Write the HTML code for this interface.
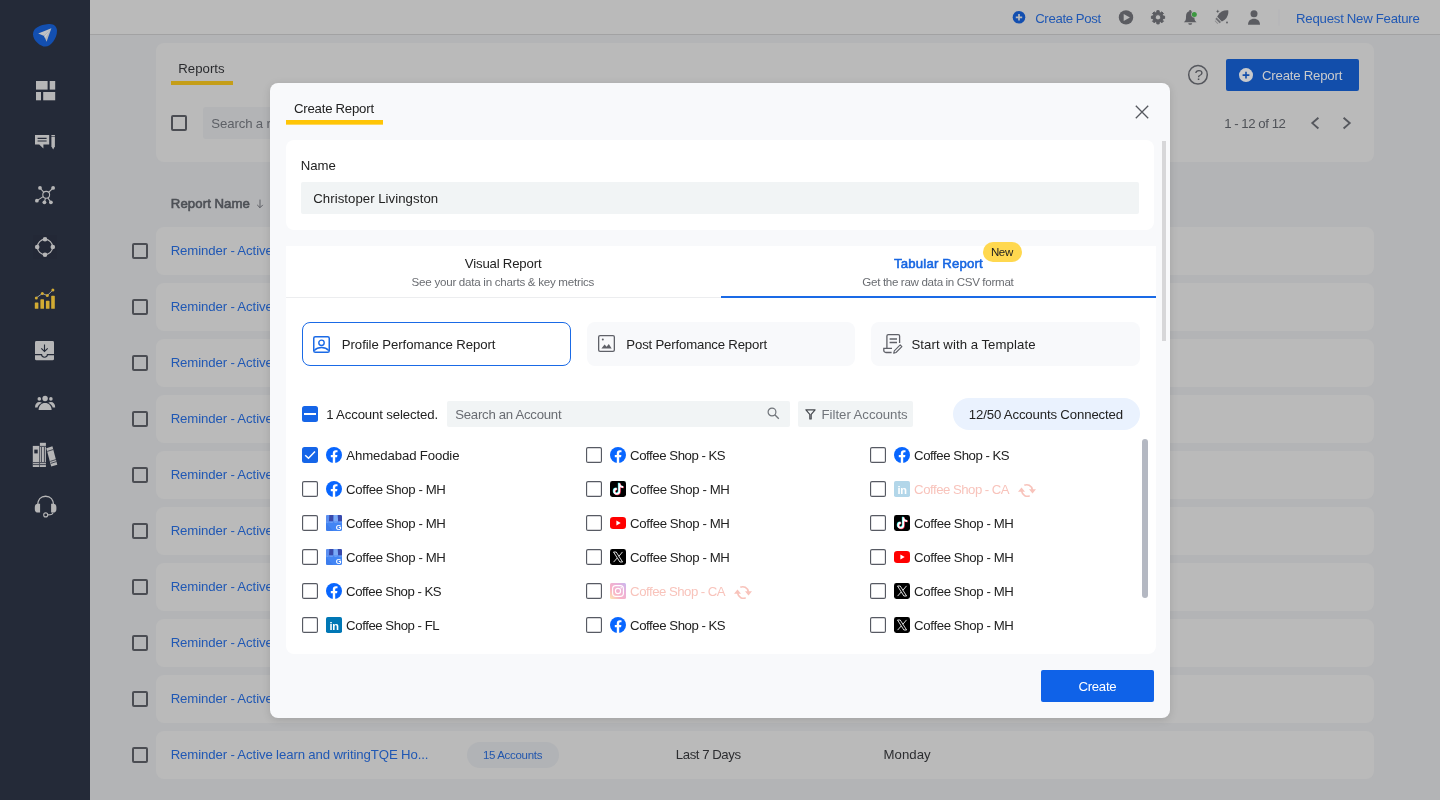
<!DOCTYPE html>
<html lang="en">
<head>
<meta charset="utf-8">
<title>Create Report</title>
<style>
*{box-sizing:border-box;margin:0;padding:0}
html,body{width:1440px;height:800px;overflow:hidden}
body{position:relative;background:#b3b4b6;font-family:"Liberation Sans",sans-serif;font-size:13.7px;color:#222}
#app{position:absolute;left:0;top:0;width:1440px;height:800px;will-change:transform}
.b{position:absolute}
.t{position:absolute;white-space:nowrap;line-height:20px;height:20px;word-spacing:-.2px}
svg{position:absolute;display:block;overflow:visible}
#side{position:absolute;left:0;top:0;width:90px;height:800px;background:#242a38}
#top{position:absolute;left:90px;top:0;width:1350px;height:35px;background:#bababa;border-bottom:1px solid #a2a2a3}
.card{position:absolute;background:#bababa;border-radius:8px}
.row{position:absolute;left:156px;width:1218px;height:48px;background:#bababa;border-radius:8px}
.bcb{position:absolute;width:16px;height:16px;border:2px solid #4b4d53;border-radius:2px}
#modal{position:absolute;left:270px;top:83px;width:900px;height:635px;background:#f8f9fb;border-radius:8px;box-shadow:0 2px 9px rgba(0,0,0,.13)}
.mcb{position:absolute;width:16px;height:16px;border-radius:2px;background:#fff;box-shadow:inset 0 0 0 1.15px #575a63}
.tb{position:absolute;top:322px;width:269px;height:44px;border-radius:8px;background:#f8f9fb}
</style>
</head>
<body>
<div id="app">
<div id="side">
<svg width="90" height="800" viewBox="0 0 90 800">
<!-- logo -->
<path d="M45.3 46.6C40.5 46.6 33 40.6 33 34.2C33 28.2 39.5 25 48.6 24.1C53.8 23.6 57 26.6 57 31C57 38.2 51 46.6 45.3 46.6Z" fill="#134fb0"/>
<path d="M51.4 28.2L38.2 33.6L44.2 36.1Z" fill="#c0c1c3"/>
<path d="M51.4 28.2L44.2 36.1L46.6 41.8Z" fill="#b4b6ba"/>
<path d="M51.4 28.2L44.2 36.1L45 38.2Z" fill="#c8c9cb"/>
<!-- dashboard -->
<g fill="#b6b6b7">
<rect x="36" y="81" width="11.6" height="8.6"/><rect x="49.7" y="81" width="5.5" height="8.6"/>
<rect x="36" y="92" width="5" height="8.3"/><rect x="43.2" y="92" width="12" height="8.3"/>
</g>
<!-- compose -->
<g fill="#b6b6b7">
<path d="M35 135H49.2V144.6H43.4V148.4L39.2 144.6H35Z"/>
<path d="M51.4 136.8H54.9V146.2L53.15 149.4L51.4 146.2Z"/><rect x="51.4" y="135" width="3.5" height="1.2"/>
</g>
<g stroke="#242a38" stroke-width="1.1"><path d="M37.6 138.4H46.6M37.6 141H46.6"/></g>
<!-- network -->
<g stroke="#b6b6b7" stroke-width="1.1" fill="none">
<circle cx="46.2" cy="194.8" r="3.4"/>
<path d="M43.9 192.4L40 188M48.6 192.4L53.1 188M43.2 196.6L37 200.6M45.5 198.2L44.4 202.2M47.8 197.9L50.9 202.2"/>
</g>
<g fill="#b6b6b7"><circle cx="40" cy="187.9" r="1.9"/><circle cx="53.1" cy="187.9" r="1.9"/><circle cx="36.9" cy="200.7" r="1.9"/><circle cx="44.4" cy="202.3" r="1.9"/><circle cx="50.9" cy="202.3" r="1.9"/></g>
<!-- circle nodes -->
<rect x="33" y="235" width="24" height="24" fill="#232836"/>
<circle cx="45" cy="247" r="7.6" fill="none" stroke="#b6b6b7" stroke-width="1.2"/>
<g fill="#b6b6b7"><circle cx="45" cy="239.2" r="2.3"/><circle cx="45" cy="254.8" r="2.3"/><circle cx="37.2" cy="247" r="2.3"/><circle cx="52.8" cy="247" r="2.3"/></g>
<!-- chart -->
<g fill="#d2ab33">
<rect x="34.8" y="302.5" width="3.6" height="6.3" rx=".6"/><rect x="40.4" y="299.3" width="3.6" height="9.5" rx=".6"/><rect x="45.9" y="300.8" width="3.6" height="8" rx=".6"/><rect x="51.2" y="295.8" width="3.6" height="13" rx=".6"/>
</g>
<path d="M36.3 297.9L42.3 293.5L47.3 295.5L52.9 290" stroke="#a9aaae" stroke-width=".9" fill="none"/>
<g fill="#d2ab33"><circle cx="36.3" cy="297.9" r="1.5"/><circle cx="42.3" cy="293.5" r="1.5"/><circle cx="47.3" cy="295.5" r="1.5"/><circle cx="52.9" cy="290" r="1.5"/></g>
<!-- inbox -->
<rect x="35" y="341" width="19" height="19.3" rx="1.4" fill="#b6b6b7"/>
<g stroke="#242a38" stroke-width="1.1" fill="none"><path d="M35 354.6H41.6C41.6 356 42.6 357.2 44.5 357.2C46.4 357.2 47.4 356 47.4 354.6H54"/><path d="M44.5 344.4V351.2M41.3 348.4L44.5 351.5L47.7 348.4"/></g>
<!-- people -->
<g fill="#b6b6b7">
<circle cx="45.1" cy="398.5" r="2.7"/><circle cx="39.3" cy="398.9" r="1.8"/><circle cx="50.9" cy="398.9" r="1.8"/>
<path d="M38.6 410C38.6 405.6 41.4 402.9 45.1 402.9C48.8 402.9 51.6 405.6 51.6 410Z"/>
<path d="M35 407.4C35 404 36.8 402 39.4 402C40.4 402 41.2 402.3 41.9 402.8C39.4 404 37.8 406 37.5 407.4Z"/>
<path d="M55.2 407.4C55.2 404 53.4 402 50.8 402C49.8 402 49 402.3 48.3 402.8C50.8 404 52.4 406 52.7 407.4Z"/>
</g>
<!-- books -->
<g fill="#b6b6b7">
<rect x="32.8" y="445.9" width="6.5" height="21.1"/><rect x="39.9" y="442.8" width="6" height="24.2"/>
<path d="M46.3 448.2L52.4 446.3L57.3 464.7L51.2 466.6Z"/>
</g>
<g stroke="#242a38" stroke-width=".8" fill="none">
<path d="M32.8 462.6H39.3M32.8 464.6H39.3M39.9 462.6H45.9M39.9 464.6H45.9M39.9 446.4H45.9M41.4 447V462M44.4 447V462"/>
<path d="M47.2 451.4L53.3 449.5M50.2 461.4L56.1 459.5M50.8 463.4L56.7 461.5"/>
</g>
<rect x="34.3" y="449.6" width="3.4" height="3.8" fill="#242a38"/>
<!-- headset -->
<path d="M37.6 505.5C37.6 499.6 41 496.3 45.6 496.3C50.2 496.3 53.6 499.6 53.6 505.5" fill="none" stroke="#b6b6b7" stroke-width="1.5"/>
<g fill="#b6b6b7"><path d="M40.1 503.8V512.6H38.2A3.4 3.4 0 0 1 34.8 509.2V507.2A3.4 3.4 0 0 1 38.2 503.8Z"/><path d="M51.1 503.8V512.6H53A3.4 3.4 0 0 0 56.4 509.2V507.2A3.4 3.4 0 0 0 53 503.8Z"/></g>
<path d="M53 512.4C53 514.3 51.6 514.9 47.8 514.9" fill="none" stroke="#b6b6b7" stroke-width="1.1"/>
<circle cx="45.7" cy="514.9" r="2" fill="none" stroke="#b6b6b7" stroke-width="1.1"/>
</svg>
</div>
<div id="top"></div>
<svg width="1440" height="35" viewBox="0 0 1440 35" style="left:0;top:0">
<circle cx="1019" cy="17.3" r="6.3" fill="#134fb0"/>
<path d="M1015.8 17.3H1022.2M1019 14.1V20.5" stroke="#bababa" stroke-width="1.7"/>
<circle cx="1126" cy="17.4" r="7.2" fill="#5b5c61"/>
<path d="M1123.7 13.9V20.9L1129.9 17.4Z" fill="#bababa"/>
<path d="M1156.79 12.24 L1156.85 10.70 L1159.15 10.70 L1159.21 12.24 L1160.72 12.87 L1161.85 11.82 L1163.48 13.45 L1162.43 14.58 L1163.06 16.09 L1164.60 16.15 L1164.60 18.45 L1163.06 18.51 L1162.43 20.02 L1163.48 21.15 L1161.85 22.78 L1160.72 21.73 L1159.21 22.36 L1159.15 23.90 L1156.85 23.90 L1156.79 22.36 L1155.28 21.73 L1154.15 22.78 L1152.52 21.15 L1153.57 20.02 L1152.94 18.51 L1151.40 18.45 L1151.40 16.15 L1152.94 16.09 L1153.57 14.58 L1152.52 13.45 L1154.15 11.82 L1155.28 12.87Z M1155.30 17.30a2.7 2.7 0 1 0 5.4 0a2.7 2.7 0 1 0 -5.4 0Z" fill="#5b5c61" fill-rule="evenodd" stroke="#5b5c61" stroke-width="1" stroke-linejoin="round"/>
<g fill="#5b5c61">
<circle cx="1190.2" cy="11.1" r="1.1"/>
<path d="M1183.8 22.3C1186.2 20.4 1186 18.6 1186 16.2C1186 13.2 1187.7 11.3 1190.2 11.3C1192.7 11.3 1194.4 13.2 1194.4 16.2C1194.4 18.6 1194.2 20.4 1196.6 22.3Z"/>
<path d="M1188.3 23.2H1192.1C1192.1 24.2 1191.3 24.8 1190.2 24.8C1189.1 24.8 1188.3 24.2 1188.3 23.2Z"/>
</g>
<circle cx="1194.3" cy="14.4" r="3.1" fill="#bababa"/>
<circle cx="1194.3" cy="14.4" r="2.5" fill="#3c9840"/>
<g fill="#5b5c61">
<path d="M1228.3 10.4C1223.8 10 1219.8 12 1217.9 15.4L1217.2 16.8L1221.8 21.4L1223.2 20.7C1226.6 18.8 1228.7 14.9 1228.3 10.4Z"/>
<path d="M1216.6 17.6L1221 22L1219.7 23.2L1215.4 18.9Z" opacity=".8"/>
<path d="M1215 20.2L1218.4 23.6L1217.5 24L1214.8 21.2Z" opacity=".45"/>
<circle cx="1217.7" cy="11.4" r=".8"/><circle cx="1227" cy="22.5" r=".9"/>
<path d="M1217.7 9.8V13M1216.1 11.4H1219.3" stroke="#5b5c61" stroke-width=".5"/>
<circle cx="1254" cy="13.7" r="3.5"/>
<path d="M1248 24.7C1248 20.9 1250.4 18.7 1254 18.7C1257.6 18.7 1260 20.9 1260 24.7Z"/>
</g>
<rect x="1278.5" y="9.5" width="1" height="16" fill="#b3b4b7"/>
</svg>
<span class="t" style="left:1035.18px;top:9px;font-size:13.2px;letter-spacing:-0.343px;color:#2058b4;">Create Post</span><span class="t" style="left:1296.07px;top:9px;font-size:13.2px;letter-spacing:-0.229px;color:#2058b4;">Request New Feature</span>
<div class="card" style="left:156px;top:43px;width:1218px;height:119px"></div>
<span class="t" style="left:178.27px;top:59px;font-size:13.2px;letter-spacing:0.037px;color:#2a2b2e;">Reports</span>
<div class="b" style="left:171px;top:81px;width:62px;height:4px;background:#c59e18"></div>
<div class="bcb" style="left:171px;top:115px"></div>
<div class="b" style="left:203px;top:107px;width:320px;height:32px;background:#b3b4b6;border-radius:3px"></div>
<span class="t" style="left:211.29px;top:114px;font-size:13.2px;letter-spacing:-0.100px;color:#5d6066;">Search a report</span>
<svg width="22" height="22" viewBox="0 0 22 22" style="left:1187px;top:64px"><circle cx="11" cy="10.8" r="9.3" fill="none" stroke="#55575d" stroke-width="1.5"/></svg>
<span class="t" style="left:1194.62px;top:65px;font-size:15.5px;letter-spacing:-0.100px;color:#4f5157;">?</span>
<div class="b" style="left:1226px;top:59px;width:133px;height:32px;background:#124eab;border-radius:2px"></div>
<svg width="16" height="16" viewBox="0 0 16 16" style="left:1238px;top:67px"><circle cx="8" cy="8.1" r="7" fill="#c9cacc"/><path d="M4.6 8.1H11.4M8 4.7V11.5" stroke="#124eab" stroke-width="1.6"/></svg>
<span class="t" style="left:1261.98px;top:66px;font-size:13.2px;letter-spacing:-0.186px;color:#cacbcd;">Create Report</span><span class="t" style="left:1224.17px;top:114px;font-size:13.2px;letter-spacing:-0.375px;color:#4f5258;">1 - 12 of 12</span>
<svg width="12" height="16" viewBox="0 0 12 16" style="left:1309px;top:115px"><path d="M9.4 2.7L3.3 8.1L9.4 13.5" fill="none" stroke="#55575d" stroke-width="1.9"/></svg>
<svg width="12" height="16" viewBox="0 0 12 16" style="left:1340.6px;top:115px"><path d="M2.6 2.7L8.7 8.1L2.6 13.5" fill="none" stroke="#55575d" stroke-width="1.9"/></svg>
<span class="t" style="left:170.77px;top:194px;font-size:13.2px;letter-spacing:0.097px;color:#4d5056;-webkit-text-stroke:.6px #4d5056;">Report Name</span>
<svg width="8" height="10" viewBox="0 0 8 10" style="left:256px;top:199px"><path d="M4 .6V8.6M1.2 5.9L4 8.7L6.8 5.9" fill="none" stroke="#55575d" stroke-width=".9"/></svg>
<div class="row" style="top:227px"></div><div class="bcb" style="left:132px;top:243px"></div><span class="t" style="left:170.67px;top:241px;font-size:13.2px;letter-spacing:-0.095px;color:#2058b4;">Reminder - Active learn and writingTQE Ho...</span><div class="row" style="top:283px"></div><div class="bcb" style="left:132px;top:299px"></div><span class="t" style="left:170.67px;top:297px;font-size:13.2px;letter-spacing:-0.095px;color:#2058b4;">Reminder - Active learn and writingTQE Ho...</span><div class="row" style="top:339px"></div><div class="bcb" style="left:132px;top:355px"></div><span class="t" style="left:170.67px;top:353px;font-size:13.2px;letter-spacing:-0.095px;color:#2058b4;">Reminder - Active learn and writingTQE Ho...</span><div class="row" style="top:395px"></div><div class="bcb" style="left:132px;top:411px"></div><span class="t" style="left:170.67px;top:409px;font-size:13.2px;letter-spacing:-0.095px;color:#2058b4;">Reminder - Active learn and writingTQE Ho...</span><div class="row" style="top:451px"></div><div class="bcb" style="left:132px;top:467px"></div><span class="t" style="left:170.67px;top:465px;font-size:13.2px;letter-spacing:-0.095px;color:#2058b4;">Reminder - Active learn and writingTQE Ho...</span><div class="row" style="top:507px"></div><div class="bcb" style="left:132px;top:523px"></div><span class="t" style="left:170.67px;top:521px;font-size:13.2px;letter-spacing:-0.095px;color:#2058b4;">Reminder - Active learn and writingTQE Ho...</span><div class="row" style="top:563px"></div><div class="bcb" style="left:132px;top:579px"></div><span class="t" style="left:170.67px;top:577px;font-size:13.2px;letter-spacing:-0.095px;color:#2058b4;">Reminder - Active learn and writingTQE Ho...</span><div class="row" style="top:619px"></div><div class="bcb" style="left:132px;top:635px"></div><span class="t" style="left:170.67px;top:633px;font-size:13.2px;letter-spacing:-0.095px;color:#2058b4;">Reminder - Active learn and writingTQE Ho...</span><div class="row" style="top:675px"></div><div class="bcb" style="left:132px;top:691px"></div><span class="t" style="left:170.67px;top:689px;font-size:13.2px;letter-spacing:-0.095px;color:#2058b4;">Reminder - Active learn and writingTQE Ho...</span><div class="row" style="top:731px"></div><div class="bcb" style="left:132px;top:747px"></div><span class="t" style="left:170.67px;top:745px;font-size:13.2px;letter-spacing:-0.095px;color:#2058b4;">Reminder - Active learn and writingTQE Ho...</span>
<div class="b" style="left:467px;top:742px;width:92px;height:26px;border-radius:13px;background:#b1b3b6"></div>
<span class="t" style="left:482.95px;top:745px;font-size:11.5px;letter-spacing:-0.294px;color:#2256ad;">15 Accounts</span><span class="t" style="left:675.77px;top:745px;font-size:13.2px;letter-spacing:-0.396px;color:#2c2d30;">Last 7 Days</span><span class="t" style="left:883.47px;top:745px;font-size:13.2px;letter-spacing:0.054px;color:#2c2d30;">Monday</span>
<div id="modal"></div>
<span class="t" style="left:293.98px;top:99px;font-size:13.2px;letter-spacing:-0.211px;color:#222;">Create Report</span>
<div class="b" style="left:286px;top:120px;width:97px;height:4px;background:#ffc506;box-shadow:0 1px 0 rgba(255,197,6,.65)"></div>
<svg width="14" height="14" viewBox="0 0 14 14" style="left:1135.1px;top:104.9px"><path d="M.8 .8L13.2 13.2M13.2 .8L.8 13.2" stroke="#55585e" stroke-width="1.3"/></svg>
<div class="b" style="left:1162px;top:141px;width:4px;height:200px;background:#d7d7d9"></div>
<div class="b" style="left:286px;top:140px;width:868px;height:90px;background:#fff;border-radius:8px"></div>
<span class="t" style="left:300.77px;top:156px;font-size:13.2px;letter-spacing:-0.048px;color:#222;">Name</span>
<div class="b" style="left:301px;top:182px;width:838px;height:32px;background:#f1f4f5;border-radius:2px"></div>
<span class="t" style="left:313.28px;top:189px;font-size:13.2px;letter-spacing:0.058px;color:#222;">Christoper Livingston</span>
<div class="b" style="left:286px;top:246px;width:870px;height:408px;background:#fff;border-radius:0 0 8px 8px"></div>
<span class="t" style="left:464.80px;top:254px;font-size:13.2px;letter-spacing:-0.162px;color:#222;">Visual Report</span><span class="t" style="left:411.60px;top:272px;font-size:11.6px;letter-spacing:-0.217px;color:#6a6d72;">See your data in charts &amp; key metrics</span>
<div class="b" style="left:286px;top:297px;width:435px;height:1px;background:#ecedef"></div>
<div class="b" style="left:721px;top:296px;width:435px;height:2px;background:#1a6ae6"></div>
<span class="t" style="left:894.09px;top:254px;font-size:13.2px;letter-spacing:0.175px;color:#1766e2;-webkit-text-stroke:.55px #1766e2;">Tabular Report</span>
<div class="b" style="left:983px;top:242px;width:39px;height:20px;border-radius:10px;background:#ffd84f"></div>
<span class="t" style="left:990.90px;top:242px;font-size:11.5px;letter-spacing:-0.325px;color:#222;">New</span><span class="t" style="left:862.35px;top:272px;font-size:11.6px;letter-spacing:-0.292px;color:#6a6d72;">Get the raw data in CSV format</span>
<div class="tb" style="left:302px;background:#fff;border:1px solid #1a6ae6"></div>
<svg width="17" height="17" viewBox="0 0 17 17" style="left:313.2px;top:335.5px"><rect x=".75" y=".75" width="15.5" height="15.5" rx="1.6" fill="none" stroke="#1a6ae6" stroke-width="1.5"/><circle cx="8.5" cy="6.8" r="2.7" fill="none" stroke="#1a6ae6" stroke-width="1.4"/><path d="M1.2 14.6C3.2 12.4 5.7 11.5 8.5 11.5C11.3 11.5 13.8 12.4 15.8 14.6" fill="none" stroke="#1a6ae6" stroke-width="1.4"/></svg>
<span class="t" style="left:341.77px;top:335px;font-size:13.2px;letter-spacing:-0.052px;color:#222;">Profile Perfomance Report</span>
<div class="tb" style="left:587px;width:268px"></div>
<svg width="17" height="17" viewBox="0 0 17 17" style="left:598.2px;top:335.3px"><rect x=".65" y=".65" width="15.7" height="15.7" rx="1.4" fill="none" stroke="#5f6168" stroke-width="1.3"/><circle cx="4.8" cy="4.6" r="1" fill="#5f6168"/><path d="M3.4 13.4L6.6 9.4L8.6 11.8L10.8 8.9L13.7 13.4Z" fill="#5f6168"/></svg>
<span class="t" style="left:626.37px;top:335px;font-size:13.2px;letter-spacing:-0.155px;color:#222;">Post Perfomance Report</span>
<div class="tb" style="left:871.4px;width:268.2px"></div>
<svg width="20" height="20" viewBox="0 0 20 20" style="left:882.6px;top:334.2px"><g fill="none" stroke="#5f6168" stroke-width="1.3"><path d="M3.9 14V2.1A1.4 1.4 0 0 1 5.3 .7H15.2A1.4 1.4 0 0 1 16.6 2.1V9"/><path d="M9 14.3H.8V16.4A2.1 2.1 0 0 0 2.9 18.5H8.6"/><path d="M6.6 5.1H14M6.6 8.4H14" stroke-width="1.5"/><path d="M17.2 10.9L11.3 16.8L10.7 19.1L13 18.5L18.9 12.6Z" stroke-width="1.1" stroke-linejoin="round"/></g></svg>
<span class="t" style="left:911.49px;top:335px;font-size:13.2px;letter-spacing:0.085px;color:#222;">Start with a Template</span>
<div class="b" style="left:302px;top:406px;width:16px;height:16px;border-radius:2.5px;background:#1565e8"></div>
<div class="b" style="left:304px;top:413px;width:12px;height:2px;background:#fff"></div>
<span class="t" style="left:326.18px;top:405px;font-size:13.2px;letter-spacing:-0.116px;color:#222;">1 Account selected.</span>
<div class="b" style="left:447px;top:401px;width:343px;height:26px;background:#f1f4f5;border-radius:2px"></div>
<span class="t" style="left:455.19px;top:405px;font-size:13.2px;letter-spacing:-0.242px;color:#696c72;">Search an Account</span>
<svg width="13" height="13" viewBox="0 0 13 13" style="left:767.3px;top:407.1px"><circle cx="5" cy="5" r="3.9" fill="none" stroke="#70747a" stroke-width="1.2"/><path d="M7.8 7.8L11.8 11.8" stroke="#70747a" stroke-width="1.3"/></svg>
<div class="b" style="left:798px;top:401px;width:115px;height:26px;background:#f1f4f5;border-radius:2px"></div>
<svg width="11" height="11" viewBox="0 0 11 11" style="left:804.5px;top:409.1px"><path d="M.9 .8H10.1L6.2 5.4V10H4.8V5.4Z" fill="none" stroke="#45484e" stroke-width="1.15" stroke-linejoin="round"/></svg>
<span class="t" style="left:821.57px;top:405px;font-size:13.2px;letter-spacing:-0.011px;color:#70747a;">Filter Accounts</span>
<div class="b" style="left:953px;top:398px;width:187px;height:32px;border-radius:16px;background:#eaf2fe"></div>
<span class="t" style="left:968.77px;top:405px;font-size:13.2px;letter-spacing:-0.124px;color:#222;">12/50 Accounts Connected</span><div class="b" style="left:302px;top:447px;width:16px;height:16px;border-radius:2.5px;background:#1565e8"></div><svg width="16" height="16" viewBox="0 0 16 16" style="left:302px;top:447px"><path d="M3.2 8.3L6.5 11.3L13 4.6" fill="none" stroke="#fff" stroke-width="1.5"/></svg><svg width="16" height="16" viewBox="0 0 16 16" style="left:326px;top:447px;opacity:1"><circle cx="8" cy="8" r="8" fill="#0866ff"/><path d="M11.05 10.3L11.4 8H9.2V6.55C9.2 5.9 9.5 5.3 10.5 5.3H11.5V3.35C11.5 3.35 10.6 3.2 9.75 3.2C7.95 3.2 6.8 4.3 6.8 6.25V8H4.8V10.3H6.8V15.9C7.6 16.03 8.4 16.03 9.2 15.9V10.3Z" fill="#fff"/></svg><span class="t" style="left:346.30px;top:446px;font-size:13.2px;letter-spacing:-0.112px;color:#222;">Ahmedabad Foodie</span><div class="mcb" style="left:302px;top:481px"></div><svg width="16" height="16" viewBox="0 0 16 16" style="left:326px;top:481px;opacity:1"><circle cx="8" cy="8" r="8" fill="#0866ff"/><path d="M11.05 10.3L11.4 8H9.2V6.55C9.2 5.9 9.5 5.3 10.5 5.3H11.5V3.35C11.5 3.35 10.6 3.2 9.75 3.2C7.95 3.2 6.8 4.3 6.8 6.25V8H4.8V10.3H6.8V15.9C7.6 16.03 8.4 16.03 9.2 15.9V10.3Z" fill="#fff"/></svg><span class="t" style="left:346.08px;top:480px;font-size:13.2px;letter-spacing:-0.327px;color:#222;">Coffee Shop - MH</span><div class="mcb" style="left:302px;top:515px"></div><svg width="16" height="16" viewBox="0 0 16 16" style="left:326px;top:515px;opacity:1"><rect width="16" height="16" rx="1.6" fill="#4285f4"/><path d="M0 8.5L7.5 16H1.6A1.6 1.6 0 0 1 0 14.4Z" fill="#3b78e7" opacity=".6"/><path d="M1.4 0H3.4L2.9 6.6H0V1.6C0 .7.6 0 1.4 0Z" fill="#5c8ff0"/><path d="M3.4 0H7.6L7.5 6.6H2.9Z" fill="#3949ab"/><path d="M7.6 0H11.8L12.1 6.6H7.5Z" fill="#7baaf7"/><path d="M11.8 0H14.6C15.4 0 16 .7 16 1.6V6.6H12.1Z" fill="#3949ab"/><path d="M0 6.5H2.9A1.45 1.3 0 0 1 0 6.9ZM2.9 6.5H7.5A2.3 1.5 0 0 1 2.9 6.5ZM7.5 6.5H12.1A2.3 1.5 0 0 1 7.5 6.5ZM12.1 6.5H16V6.9A1.95 1.3 0 0 1 12.1 6.5Z" fill="#6b9df5"/><text x="12.5" y="15" text-anchor="middle" font-family="Liberation Sans,sans-serif" font-weight="700" font-size="7.4" fill="#fff">G</text></svg><span class="t" style="left:346.08px;top:514px;font-size:13.2px;letter-spacing:-0.327px;color:#222;">Coffee Shop - MH</span><div class="mcb" style="left:302px;top:549px"></div><svg width="16" height="16" viewBox="0 0 16 16" style="left:326px;top:549px;opacity:1"><rect width="16" height="16" rx="1.6" fill="#4285f4"/><path d="M0 8.5L7.5 16H1.6A1.6 1.6 0 0 1 0 14.4Z" fill="#3b78e7" opacity=".6"/><path d="M1.4 0H3.4L2.9 6.6H0V1.6C0 .7.6 0 1.4 0Z" fill="#5c8ff0"/><path d="M3.4 0H7.6L7.5 6.6H2.9Z" fill="#3949ab"/><path d="M7.6 0H11.8L12.1 6.6H7.5Z" fill="#7baaf7"/><path d="M11.8 0H14.6C15.4 0 16 .7 16 1.6V6.6H12.1Z" fill="#3949ab"/><path d="M0 6.5H2.9A1.45 1.3 0 0 1 0 6.9ZM2.9 6.5H7.5A2.3 1.5 0 0 1 2.9 6.5ZM7.5 6.5H12.1A2.3 1.5 0 0 1 7.5 6.5ZM12.1 6.5H16V6.9A1.95 1.3 0 0 1 12.1 6.5Z" fill="#6b9df5"/><text x="12.5" y="15" text-anchor="middle" font-family="Liberation Sans,sans-serif" font-weight="700" font-size="7.4" fill="#fff">G</text></svg><span class="t" style="left:346.08px;top:548px;font-size:13.2px;letter-spacing:-0.327px;color:#222;">Coffee Shop - MH</span><div class="mcb" style="left:302px;top:583px"></div><svg width="16" height="16" viewBox="0 0 16 16" style="left:326px;top:583px;opacity:1"><circle cx="8" cy="8" r="8" fill="#0866ff"/><path d="M11.05 10.3L11.4 8H9.2V6.55C9.2 5.9 9.5 5.3 10.5 5.3H11.5V3.35C11.5 3.35 10.6 3.2 9.75 3.2C7.95 3.2 6.8 4.3 6.8 6.25V8H4.8V10.3H6.8V15.9C7.6 16.03 8.4 16.03 9.2 15.9V10.3Z" fill="#fff"/></svg><span class="t" style="left:346.08px;top:582px;font-size:13.2px;letter-spacing:-0.414px;color:#222;">Coffee Shop - KS</span><div class="mcb" style="left:302px;top:617px"></div><svg width="16" height="16" viewBox="0 0 16 16" style="left:326px;top:617px;opacity:1"><rect width="16" height="16" rx="1.8" fill="#0077b5"/><text x="8.1" y="12.7" text-anchor="middle" font-family="Liberation Sans,sans-serif" font-weight="700" font-size="11" letter-spacing="-.3" fill="#fff">in</text></svg><span class="t" style="left:346.08px;top:616px;font-size:13.2px;letter-spacing:-0.402px;color:#222;">Coffee Shop - FL</span><div class="mcb" style="left:586px;top:447px"></div><svg width="16" height="16" viewBox="0 0 16 16" style="left:610px;top:447px;opacity:1"><circle cx="8" cy="8" r="8" fill="#0866ff"/><path d="M11.05 10.3L11.4 8H9.2V6.55C9.2 5.9 9.5 5.3 10.5 5.3H11.5V3.35C11.5 3.35 10.6 3.2 9.75 3.2C7.95 3.2 6.8 4.3 6.8 6.25V8H4.8V10.3H6.8V15.9C7.6 16.03 8.4 16.03 9.2 15.9V10.3Z" fill="#fff"/></svg><span class="t" style="left:630.08px;top:446px;font-size:13.2px;letter-spacing:-0.414px;color:#222;">Coffee Shop - KS</span><div class="mcb" style="left:586px;top:481px"></div><svg width="16" height="16" viewBox="0 0 16 16" style="left:610px;top:481px;opacity:1"><rect width="16" height="16" rx="2.4" fill="#000"/><g fill="none" stroke-width="1.8"><path d="M9.3 2.2V10.3A2.55 2.55 0 1 1 6.75 7.75M9.3 2.2C9.4 4.4 10.9 5.9 13.2 6" stroke="#25f4ee" transform="translate(-.55 -.45)"/><path d="M9.3 2.2V10.3A2.55 2.55 0 1 1 6.75 7.75M9.3 2.2C9.4 4.4 10.9 5.9 13.2 6" stroke="#fe2c55" transform="translate(.55 .45)"/><path d="M9.3 2.2V10.3A2.55 2.55 0 1 1 6.75 7.75M9.3 2.2C9.4 4.4 10.9 5.9 13.2 6" stroke="#fff"/></g></svg><span class="t" style="left:630.08px;top:480px;font-size:13.2px;letter-spacing:-0.327px;color:#222;">Coffee Shop - MH</span><div class="mcb" style="left:586px;top:515px"></div><svg width="16" height="16" viewBox="0 0 16 16" style="left:610px;top:515px;opacity:1"><rect x="0" y="2.1" width="16" height="11.8" rx="3.2" fill="#ff0000"/><path d="M6.4 5.5V10.5L10.7 8Z" fill="#fff"/></svg><span class="t" style="left:630.08px;top:514px;font-size:13.2px;letter-spacing:-0.327px;color:#222;">Coffee Shop - MH</span><div class="mcb" style="left:586px;top:549px"></div><svg width="16" height="16" viewBox="0 0 16 16" style="left:610px;top:549px;opacity:1"><rect width="16" height="16" rx="2.4" fill="#000"/><path d="M3.5 3H6.2L12.6 13H9.9Z" fill="none" stroke="#fff" stroke-width=".85"/><path d="M12.5 2.9L8.9 7.3M7.2 9L3.6 13.1" stroke="#fff" stroke-width=".85"/></svg><span class="t" style="left:630.08px;top:548px;font-size:13.2px;letter-spacing:-0.327px;color:#222;">Coffee Shop - MH</span><div class="mcb" style="left:586px;top:583px"></div><svg width="16" height="16" viewBox="0 0 16 16" style="left:610px;top:583px;opacity:0.38"><defs><linearGradient id="ig14" x1="0" y1="1" x2="1" y2="0"><stop offset="0" stop-color="#fdc83a"/><stop offset=".35" stop-color="#f0386b"/><stop offset=".7" stop-color="#c935a0"/><stop offset="1" stop-color="#6f46d8"/></linearGradient></defs><rect width="16" height="16" rx="1.5" fill="url(#ig14)"/><rect x="2.6" y="2.6" width="10.8" height="10.8" rx="3.1" fill="none" stroke="#fff" stroke-width="1.15"/><circle cx="8" cy="8" r="2.6" fill="none" stroke="#fff" stroke-width="1.15"/><circle cx="11.2" cy="4.8" r=".75" fill="#fff"/></svg><span class="t" style="left:630.08px;top:582px;font-size:13.2px;letter-spacing:-0.464px;color:#f8c3bb;">Coffee Shop - CA</span><svg width="18" height="13" viewBox="0 0 18 13" style="left:733.7px;top:586.2px"><g fill="none" stroke="#f8c3bb" stroke-width="1.6"><path d="M6.3 1.3C9.4 -.2 13.6 1.2 14.4 6"/><path d="M11.7 11.7C8.6 13.2 4.4 11.8 3.6 7"/></g><path d="M11 5.2H18L14.5 9.6Z" fill="#f8c3bb"/><path d="M0 7.8H7L3.5 3.4Z" fill="#f8c3bb"/></svg><div class="mcb" style="left:586px;top:617px"></div><svg width="16" height="16" viewBox="0 0 16 16" style="left:610px;top:617px;opacity:1"><circle cx="8" cy="8" r="8" fill="#0866ff"/><path d="M11.05 10.3L11.4 8H9.2V6.55C9.2 5.9 9.5 5.3 10.5 5.3H11.5V3.35C11.5 3.35 10.6 3.2 9.75 3.2C7.95 3.2 6.8 4.3 6.8 6.25V8H4.8V10.3H6.8V15.9C7.6 16.03 8.4 16.03 9.2 15.9V10.3Z" fill="#fff"/></svg><span class="t" style="left:630.08px;top:616px;font-size:13.2px;letter-spacing:-0.414px;color:#222;">Coffee Shop - KS</span><div class="mcb" style="left:870px;top:447px"></div><svg width="16" height="16" viewBox="0 0 16 16" style="left:894px;top:447px;opacity:1"><circle cx="8" cy="8" r="8" fill="#0866ff"/><path d="M11.05 10.3L11.4 8H9.2V6.55C9.2 5.9 9.5 5.3 10.5 5.3H11.5V3.35C11.5 3.35 10.6 3.2 9.75 3.2C7.95 3.2 6.8 4.3 6.8 6.25V8H4.8V10.3H6.8V15.9C7.6 16.03 8.4 16.03 9.2 15.9V10.3Z" fill="#fff"/></svg><span class="t" style="left:914.08px;top:446px;font-size:13.2px;letter-spacing:-0.414px;color:#222;">Coffee Shop - KS</span><div class="mcb" style="left:870px;top:481px"></div><svg width="16" height="16" viewBox="0 0 16 16" style="left:894px;top:481px;opacity:0.3"><rect width="16" height="16" rx="1.8" fill="#0077b5"/><text x="8.1" y="12.7" text-anchor="middle" font-family="Liberation Sans,sans-serif" font-weight="700" font-size="11" letter-spacing="-.3" fill="#fff">in</text></svg><span class="t" style="left:914.08px;top:480px;font-size:13.2px;letter-spacing:-0.464px;color:#f8c3bb;">Coffee Shop - CA</span><svg width="18" height="13" viewBox="0 0 18 13" style="left:1017.7px;top:484.2px"><g fill="none" stroke="#f8c3bb" stroke-width="1.6"><path d="M6.3 1.3C9.4 -.2 13.6 1.2 14.4 6"/><path d="M11.7 11.7C8.6 13.2 4.4 11.8 3.6 7"/></g><path d="M11 5.2H18L14.5 9.6Z" fill="#f8c3bb"/><path d="M0 7.8H7L3.5 3.4Z" fill="#f8c3bb"/></svg><div class="mcb" style="left:870px;top:515px"></div><svg width="16" height="16" viewBox="0 0 16 16" style="left:894px;top:515px;opacity:1"><rect width="16" height="16" rx="2.4" fill="#000"/><g fill="none" stroke-width="1.8"><path d="M9.3 2.2V10.3A2.55 2.55 0 1 1 6.75 7.75M9.3 2.2C9.4 4.4 10.9 5.9 13.2 6" stroke="#25f4ee" transform="translate(-.55 -.45)"/><path d="M9.3 2.2V10.3A2.55 2.55 0 1 1 6.75 7.75M9.3 2.2C9.4 4.4 10.9 5.9 13.2 6" stroke="#fe2c55" transform="translate(.55 .45)"/><path d="M9.3 2.2V10.3A2.55 2.55 0 1 1 6.75 7.75M9.3 2.2C9.4 4.4 10.9 5.9 13.2 6" stroke="#fff"/></g></svg><span class="t" style="left:914.08px;top:514px;font-size:13.2px;letter-spacing:-0.327px;color:#222;">Coffee Shop - MH</span><div class="mcb" style="left:870px;top:549px"></div><svg width="16" height="16" viewBox="0 0 16 16" style="left:894px;top:549px;opacity:1"><rect x="0" y="2.1" width="16" height="11.8" rx="3.2" fill="#ff0000"/><path d="M6.4 5.5V10.5L10.7 8Z" fill="#fff"/></svg><span class="t" style="left:914.08px;top:548px;font-size:13.2px;letter-spacing:-0.327px;color:#222;">Coffee Shop - MH</span><div class="mcb" style="left:870px;top:583px"></div><svg width="16" height="16" viewBox="0 0 16 16" style="left:894px;top:583px;opacity:1"><rect width="16" height="16" rx="2.4" fill="#000"/><path d="M3.5 3H6.2L12.6 13H9.9Z" fill="none" stroke="#fff" stroke-width=".85"/><path d="M12.5 2.9L8.9 7.3M7.2 9L3.6 13.1" stroke="#fff" stroke-width=".85"/></svg><span class="t" style="left:914.08px;top:582px;font-size:13.2px;letter-spacing:-0.327px;color:#222;">Coffee Shop - MH</span><div class="mcb" style="left:870px;top:617px"></div><svg width="16" height="16" viewBox="0 0 16 16" style="left:894px;top:617px;opacity:1"><rect width="16" height="16" rx="2.4" fill="#000"/><path d="M3.5 3H6.2L12.6 13H9.9Z" fill="none" stroke="#fff" stroke-width=".85"/><path d="M12.5 2.9L8.9 7.3M7.2 9L3.6 13.1" stroke="#fff" stroke-width=".85"/></svg><span class="t" style="left:914.08px;top:616px;font-size:13.2px;letter-spacing:-0.327px;color:#222;">Coffee Shop - MH</span>
<div class="b" style="left:1142px;top:439px;width:6px;height:159px;background:#b4b8c2;border-radius:3px"></div>
<div class="b" style="left:1041px;top:670px;width:113px;height:32px;background:#0f62e8;border-radius:2px"></div>
<span class="t" style="left:1078.38px;top:677px;font-size:13.2px;letter-spacing:-0.253px;color:#fff;">Create</span>
</div>
</body>
</html>
